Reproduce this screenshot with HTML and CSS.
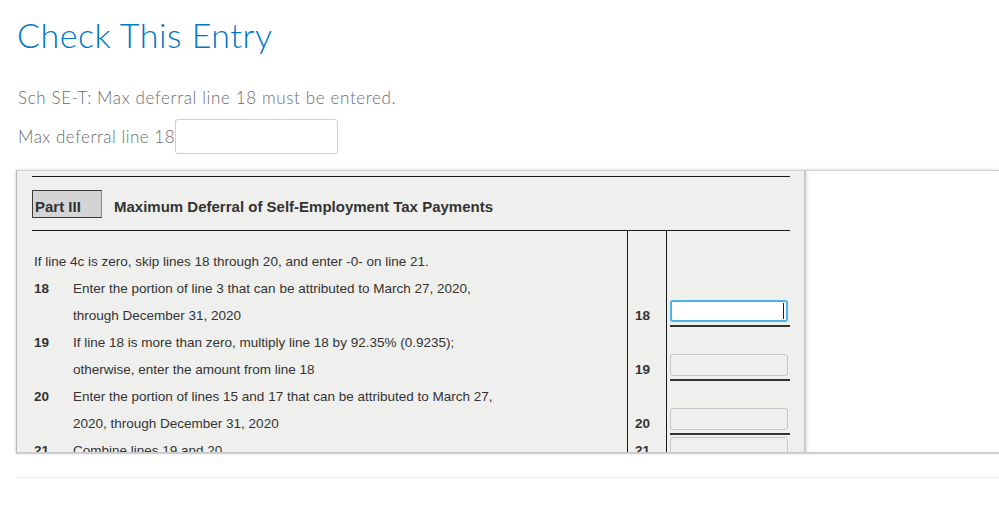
FILE: index.html
```html
<!DOCTYPE html>
<html lang="en">
<head>
	<meta charset="utf-8">
	<meta name="viewport" content="width=device-width, initial-scale=1">
	<title>Check This Entry</title>
	<link rel="stylesheet" href="styles.css">
</head>

<body>
	<div id="page">
		<h1 class="title">Check This Entry</h1>

		<p class="message">Sch SE-T: Max deferral line 18 must be entered.</p>
		<p class="entry">
			<label for="maxDeferral">Max deferral line 18</label><input type="text" id="maxDeferral" class="entry-input">
		</p>

		<div class="frame">
			<div class="sheet">
				<div class="part-head">
					<span class="part-tag">Part III</span>
					<span class="part-title">Maximum Deferral of Self-Employment Tax Payments</span>
				</div>

				<div class="lines">
					<div class="desc intro">If line 4c is zero, skip lines 18 through 20, and enter -0- on line 21.</div>
					<div class="ref intro"></div>
					<div class="amt intro"></div>

					<div class="desc"><span class="num">18</span><span class="txt">Enter the portion of line 3 that can be attributed to March 27, 2020,<br>through December 31, 2020</span></div>
					<div class="ref">18</div>
					<div class="amt"><div class="field"><input type="text" class="box active" aria-label="Line 18"><span class="caret"></span></div></div>

					<div class="desc"><span class="num">19</span><span class="txt">If line 18 is more than zero, multiply line 18 by 92.35% (0.9235);<br>otherwise, enter the amount from line 18</span></div>
					<div class="ref">19</div>
					<div class="amt"><div class="field"><input type="text" class="box" aria-label="Line 19" disabled></div></div>

					<div class="desc"><span class="num">20</span><span class="txt">Enter the portion of lines 15 and 17 that can be attributed to March 27,<br>2020, through December 31, 2020</span></div>
					<div class="ref">20</div>
					<div class="amt"><div class="field"><input type="text" class="box" aria-label="Line 20" disabled></div></div>

					<div class="desc single"><span class="num">21</span><span class="txt">Combine lines 19 and 20</span></div>
					<div class="ref single">21</div>
					<div class="amt single"><div class="field"><input type="text" class="box" aria-label="Line 21" disabled></div></div>
				</div>
			</div>
		</div>

		<hr class="divider">
	</div>
</body>

</html>
```

FILE: styles.css
```css
html {
	box-sizing: border-box;
}
*,
*::before,
*::after {
	box-sizing: inherit;
}

body {
	background-color: #fff;
	color: #6b6c72;
	font-family: Lato, "Open Sans", sans-serif;
	font-weight: 300;
	margin: 0;
	padding: 0;
}

#page {
	padding: 0 0 0 16px;
}

.title {
	color: #0077c5;
	font-size: 34px;
	font-weight: 300;
	letter-spacing: 0.5px;
	line-height: 40px;
	margin: 0;
	padding: 15px 0 0 1px;
}

.message {
	font-size: 17px;
	letter-spacing: 0.63px;
	line-height: 24px;
	margin: 31px 0 0 2px;
}

.entry {
	font-size: 17px;
	letter-spacing: 0.5px;
	line-height: 24px;
	margin: 9px 0 0 2px;
	display: flex;
	align-items: center;
}

.entry-input {
	width: 163px;
	height: 35px;
	margin-left: 0;
	border: 1px solid #cfcfcf;
	border-radius: 3px;
	font-family: inherit;
	font-size: inherit;
	outline: none;
}

/* embedded form view */
.frame {
	margin-top: 16px;
	height: 284px;
	background-color: #fff;
	border-top: 1px solid #d0d0d0;
	border-left: 1px solid #b8b8b8;
	border-bottom: 2px solid #cdcdcd;
	box-shadow: 0 -1px 3px rgba(0, 0, 0, 0.08), -1px 0 2px rgba(0, 0, 0, 0.08);
	overflow: hidden;
}

.sheet {
	width: 789px;
	height: 100%;
	padding: 5px 0 0 15px;
	background-color: #efefed;
	border-right: 2px solid #c9c9c9;
	box-shadow: 1px 0 3px rgba(0, 0, 0, 0.15);
	color: #333;
	font-family: "Liberation Sans", Arial, sans-serif;
	font-weight: normal;
	font-size: 13.5px;
	letter-spacing: normal;
}

.part-head {
	width: 758px;
	height: 55px;
	border-top: 1px solid #1a1a1a;
	border-bottom: 1px solid #1a1a1a;
	display: flex;
	align-items: flex-start;
	padding-top: 13px;
}

.part-tag {
	width: 70px;
	height: 28px;
	padding: 7px 0 0 2px;
	background-color: #d4d4d4;
	border: 1px solid #3a3a3a;
	border-right-color: #8a8a8a;
	font-size: 15px;
	font-weight: bold;
	line-height: 17px;
}

.part-title {
	margin-left: 12px;
	padding-top: 8px;
	font-size: 15px;
	font-weight: bold;
	line-height: 17px;
}

.lines {
	display: grid;
	grid-template-columns: 595px 40px 123px;
	width: 758px;
}

.desc {
	display: flex;
	padding-left: 2px;
	line-height: 27px;
	height: 54px;
	white-space: nowrap;
}

.desc.intro {
	height: 44px;
	padding-top: 17px;
}

.num {
	width: 39px;
	font-weight: bold;
}

.ref {
	border-left: 1px solid #1a1a1a;
	border-right: 1px solid #1a1a1a;
	padding: 27px 0 0 7px;
	line-height: 27px;
	font-weight: bold;
}

.amt {
	padding: 25px 0 0 3px;
}

.intro.amt,
.intro.ref {
	padding: 0;
}

.single.ref {
	padding-top: 0;
}

.single.amt {
	padding-top: 0;
}

.single.desc {
	height: 27px;
}

.field {
	position: relative;
	width: 120px;
	padding-bottom: 3px;
	border-bottom: 2px solid #333;
}

.box {
	display: block;
	width: 118px;
	height: 22px;
	border: 1px solid #c6c6c6;
	border-radius: 3px;
	background-color: #efefef;
	font-family: inherit;
	font-size: inherit;
	outline: none;
	padding: 0 4px;
	text-align: right;
}

.box.active {
	background-color: #fff;
	border: 2px solid #4db2e6;
}

.caret {
	position: absolute;
	top: 3px;
	right: 6px;
	width: 1px;
	height: 16px;
	background-color: #222;
}

.divider {
	border: none;
	border-top: 1px solid #ececec;
	margin: 23px 0 0;
}
```
